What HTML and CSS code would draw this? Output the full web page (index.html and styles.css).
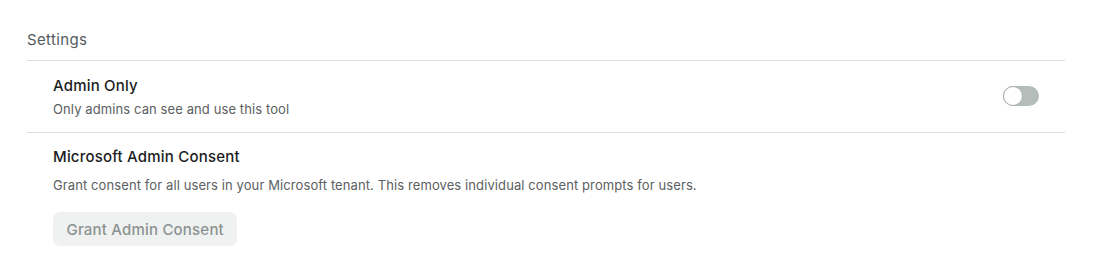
FILE: index.html
```html
<!DOCTYPE html>
<html>
<head>
<meta charset="utf-8">
<link rel="stylesheet" href="styles.css">
</head>
<body>
<div class="settings">
  <div class="heading">Settings</div>
  <div class="row">
    <div class="text">
      <div class="title">Admin Only</div>
      <div class="desc">Only admins can see and use this tool</div>
    </div>
    <div class="toggle"><div class="thumb"></div></div>
  </div>
  <div class="row last">
    <div class="text">
      <div class="title">Microsoft Admin Consent</div>
      <div class="desc spaced">Grant consent for all users in your Microsoft tenant. This removes individual consent prompts for users.</div>
      <button class="btn" disabled>Grant Admin Consent</button>
    </div>
  </div>
</div>
</body>
</html>
```
FILE: styles.css
```css
html, body { margin: 0; padding: 0; background: #fff; }
body { font-family: Inter, "Noto Sans", sans-serif; }
.settings { padding: 30px 42px 0 27px; }
.heading { font-size: 15px; letter-spacing: 0.35px; color: #555a5c; line-height: 20px; padding-bottom: 10px; border-bottom: 1px solid #dcdfde; }
.row { display: flex; align-items: center; justify-content: space-between; padding: 13px 26px 14px 26px; border-bottom: 1px solid #dcdfde; }
.row.last { border-bottom: none; padding-top: 12px; }
.title { font-size: 15px; font-weight: 500; letter-spacing: 0.2px; color: #1b1d1e; line-height: 24px; }
.desc { font-size: 13px; letter-spacing: 0.1px; color: #5b6062; line-height: 18px; margin-top: 2px; }
.desc.spaced { margin-top: 7px; }
.btn { display: block; margin-top: 18px; font-family: inherit; font-size: 15px; font-weight: 500; letter-spacing: 0.2px; color: #8b9391; background: #f0f1f1; border: none; border-radius: 7px; height: 34px; padding: 0 13.5px; }
.toggle { width: 36px; height: 20px; border-radius: 10px; background: #b4bdb9; position: relative; }
.thumb { position: absolute; left: 0; top: 0; width: 18px; height: 18px; border-radius: 50%; background: #fff; border: 1px solid #a7b0ad; }
```
